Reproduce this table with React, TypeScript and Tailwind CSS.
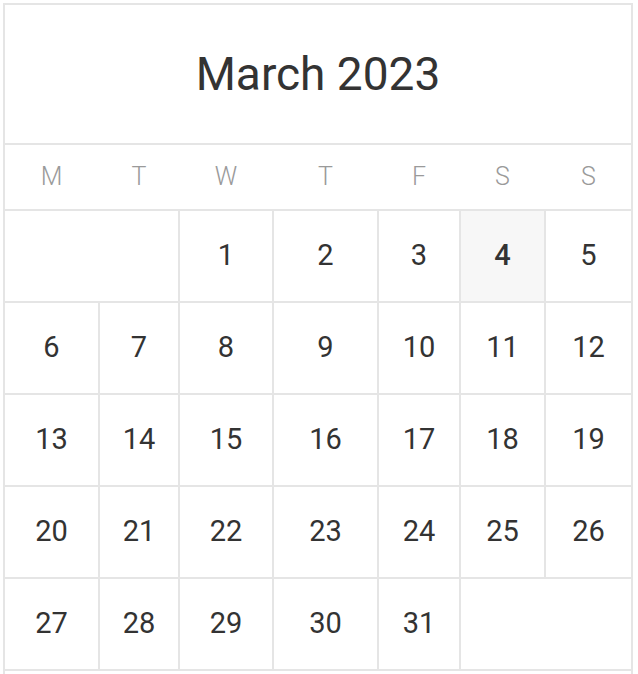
import React from "react";

const weekdays = ["M", "T", "W", "T", "F", "S", "S"];

// March 2023 starts on a Wednesday
const days = Array.from({ length: 31 }, (_, i) => i + 1);

const CalendarCell: React.FC<{ day: number }> = ({ day }) => {
  const today = day === 4;
  return (
    <div
      className={`h-[90px] flex items-center justify-center text-[29px] text-[#333] ${
        today ? "bg-[#f7f7f7] font-medium" : "bg-white"
      }`}
    >
      {day}
    </div>
  );
};

export default function App() {
  return (
    <div className="bg-white min-h-screen pt-[3px] pl-[3px]" style={{ fontFamily: "Roboto, 'Liberation Sans', sans-serif" }}>
      <div className="w-[630px] border-2 border-[#e5e5e5] bg-white">
        <div className="h-[140px] flex items-center justify-center text-[46px] text-[#333] border-b-2 border-[#e5e5e5]">
          March 2023
        </div>

        <div className="grid grid-cols-[93px_78px_92px_103px_80px_83px_85px] gap-x-[2px] h-[66px] border-b-2 border-[#e5e5e5]">
          {weekdays.map((d, i) => (
            <div key={i} className="flex items-center justify-center text-[25px] font-light text-[#9a9a9a]">
              {d}
            </div>
          ))}
        </div>

        <div className="grid grid-cols-[93px_78px_92px_103px_80px_83px_85px] gap-[2px] bg-[#e5e5e5] border-b-2 border-[#e5e5e5]">
          <div className="col-span-2 bg-white h-[90px]"></div>
          {days.map((d) => (
            <CalendarCell key={d} day={d} />
          ))}
          <div className="col-span-2 bg-white h-[90px]"></div>
        </div>

        <div className="h-[40px]"></div>
      </div>
    </div>
  );
}
